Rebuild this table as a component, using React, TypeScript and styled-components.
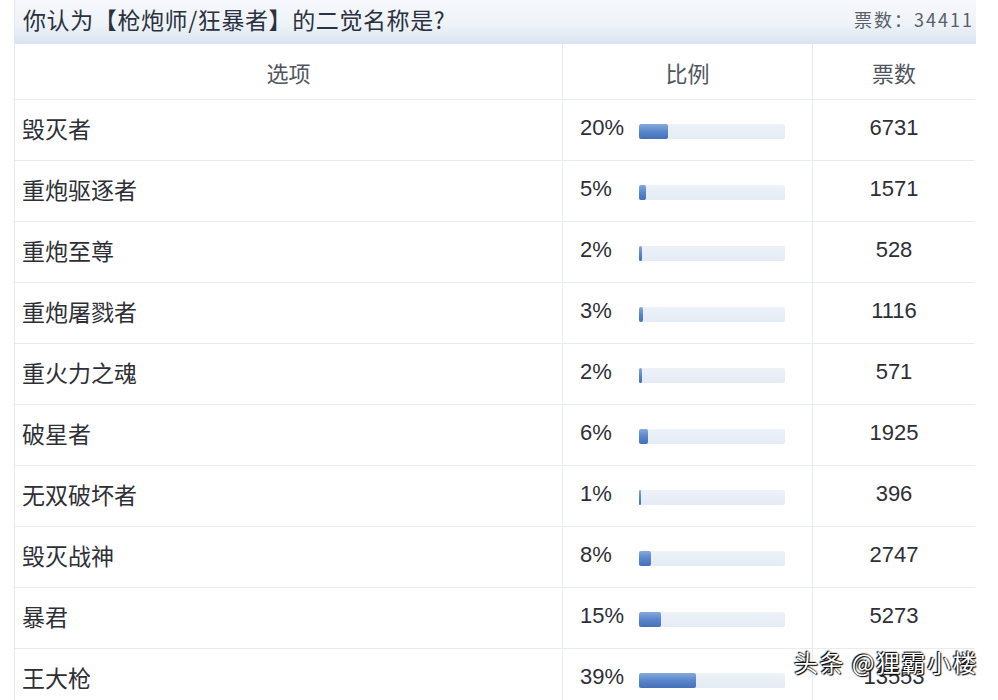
import React from "react";
import styled, { createGlobalStyle } from "styled-components";

const Global = createGlobalStyle`
  html, body {
    margin: 0;
    padding: 0;
    background: #ffffff;
    overflow: hidden;
  }
  body {
    font-family: "Noto Sans CJK SC", "Liberation Sans", sans-serif;
  }
`;

const Page = styled.div`
  position: relative;
  width: 998px;
  height: 700px;
  overflow: hidden;
  padding-left: 14px;
  box-sizing: border-box;
`;

const Panel = styled.div`
  width: 961px;
  border-left: 1px solid #e3e8ee;
`;

const TitleBar = styled.div`
  height: 44px;
  display: flex;
  align-items: center;
  justify-content: space-between;
  padding: 0 2px 6px 8px;
  box-sizing: border-box;
  background: linear-gradient(#f6f8fb 0%, #eef3f8 55%, #d9e4ef 100%);
`;

const Title = styled.div`
  font-size: 23px;
  color: #2b3140;
  letter-spacing: 0.6px;
`;

const Total = styled.div`
  font-size: 18px;
  color: #5a5f68;
  white-space: nowrap;
  letter-spacing: 2px;
  align-self: flex-start;
  padding-top: 6px;
`;

const Table = styled.div`
  display: grid;
  grid-template-columns: 548px 250px 162px;
`;

const HeadCell = styled.div<{ $last?: boolean }>`
  height: 56px;
  display: flex;
  align-items: center;
  justify-content: center;
  font-size: 22px;
  color: #50555e;
  border-right: ${(p) => (p.$last ? "none" : "1px solid #e8ecf1")};
  border-bottom: 1px solid #e8ecf1;
  box-sizing: border-box;
`;

const Cell = styled.div<{ $align?: string; $last?: boolean }>`
  height: 61px;
  display: flex;
  align-items: center;
  justify-content: ${(p) => p.$align || "flex-start"};
  border-right: ${(p) => (p.$last ? "none" : "1px solid #e8ecf1")};
  border-bottom: 1px solid #e8ecf1;
  box-sizing: border-box;
  padding-bottom: 4px;
`;

const Option = styled.span`
  font-size: 23px;
  color: #2e2f36;
  padding-left: 7px;
`;

const Percent = styled.span`
  font-family: "Liberation Sans", "Noto Sans", sans-serif;
  font-size: 22px;
  color: #2e2f36;
  width: 59px;
  padding-left: 17px;
`;

const Track = styled.div`
  width: 146px;
  height: 15px;
  margin-top: 6px;
  border-radius: 2px;
  background: linear-gradient(#edf2f8, #e4ebf3);
  display: flex;
`;

const Fill = styled.div`
  height: 100%;
  min-width: 2px;
  border-radius: 2px;
  background: linear-gradient(#86a9dc 0%, #5a86cc 50%, #4470bb 100%);
`;

const Votes = styled.span`
  font-family: "Liberation Sans", "Noto Sans", sans-serif;
  font-size: 22px;
  color: #2e2f36;
`;

const Watermark = styled.div`
  position: absolute;
  right: 20px;
  bottom: 21px;
  font-size: 24px;
  color: #ffffff;
  text-shadow: 0 0 2px #000, 1px 1px 1px #000, -1px -1px 1px #000;
  letter-spacing: 1.5px;
`;

const rows = [
  { name: "毁灭者", pct: 20, votes: 6731 },
  { name: "重炮驱逐者", pct: 5, votes: 1571 },
  { name: "重炮至尊", pct: 2, votes: 528 },
  { name: "重炮屠戮者", pct: 3, votes: 1116 },
  { name: "重火力之魂", pct: 2, votes: 571 },
  { name: "破星者", pct: 6, votes: 1925 },
  { name: "无双破坏者", pct: 1, votes: 396 },
  { name: "毁灭战神", pct: 8, votes: 2747 },
  { name: "暴君", pct: 15, votes: 5273 },
  { name: "王大枪", pct: 39, votes: 13553 },
];

const App = () => (
  <Page>
    <Global />
    <Panel>
      <TitleBar>
        <Title>你认为【枪炮师/狂暴者】的二觉名称是?</Title>
        <Total>票数：34411</Total>
      </TitleBar>
      <Table>
        <HeadCell>选项</HeadCell>
        <HeadCell>比例</HeadCell>
        <HeadCell $last>票数</HeadCell>
        {rows.map((r) => (
          <React.Fragment key={r.name}>
            <Cell>
              <Option>{r.name}</Option>
            </Cell>
            <Cell>
              <Percent>{r.pct}%</Percent>
              <Track>
                <Fill style={{ width: `${r.pct}%` }} />
              </Track>
            </Cell>
            <Cell $align="center" $last>
              <Votes>{r.votes}</Votes>
            </Cell>
          </React.Fragment>
        ))}
      </Table>
    </Panel>
    <Watermark>头条 @狸霸小楼</Watermark>
  </Page>
);

export default App;
